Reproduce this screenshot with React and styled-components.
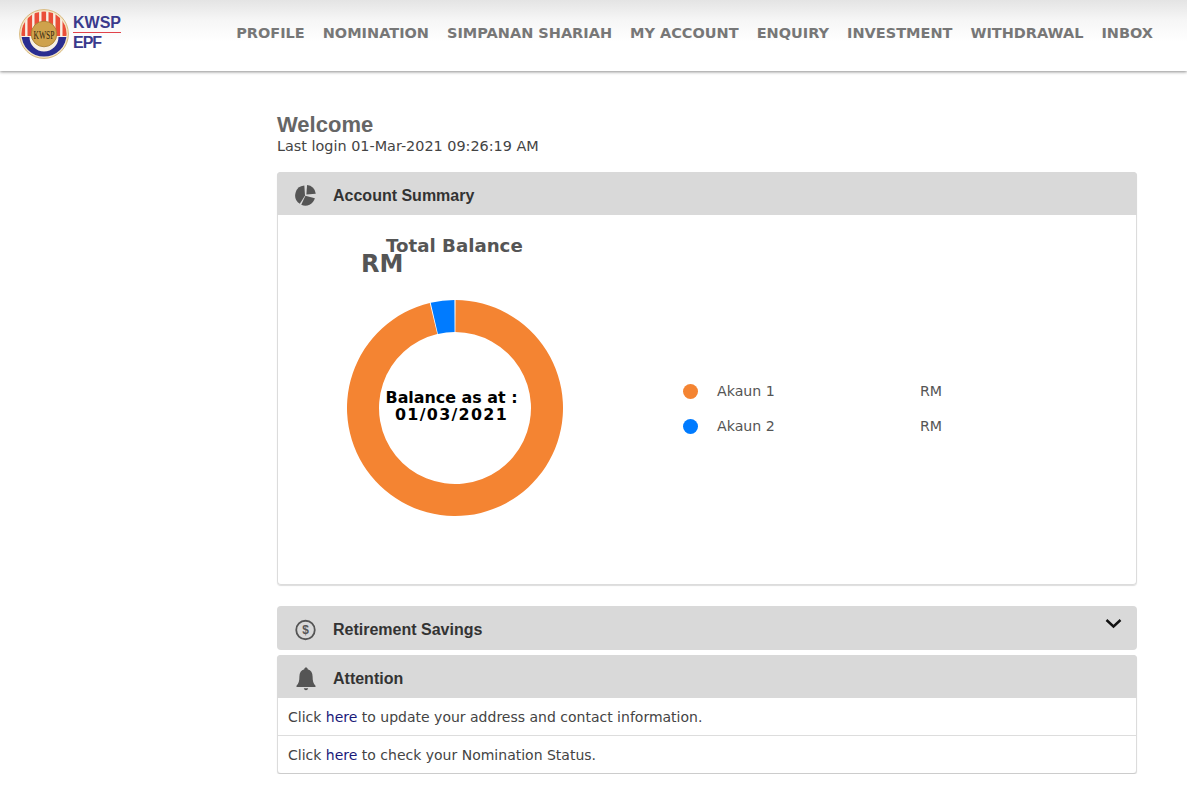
import React from 'react';
import styled, { createGlobalStyle } from 'styled-components';

const GlobalStyle = createGlobalStyle`
  html, body { margin: 0; padding: 0; background: #fff; }
  body { font-family: "DejaVu Sans", Verdana, sans-serif; color: #555; }
`;

const navItems = ['PROFILE', 'NOMINATION', 'SIMPANAN SHARIAH', 'MY ACCOUNT', 'ENQUIRY', 'INVESTMENT', 'WITHDRAWAL', 'INBOX'];

const Header = styled.header`
  height: 71px;
  box-sizing: border-box;
  display: flex;
  align-items: flex-start;
  justify-content: space-between;
  padding: 0 34px 0 19px;
  background: linear-gradient(#e4e4e4 0, #f6f6f6 20px, #fff 42px);
  box-shadow: 0 1px 3px rgba(0, 0, 0, 0.45);
`;

const Logo = styled.div`
  display: flex;
  align-items: center;
  gap: 4px;
  padding-top: 9px;
`;

const LogoText = styled.div`
  display: flex;
  flex-direction: column;
  font-family: "Liberation Sans", Arial, sans-serif;
  font-weight: 700;
  font-size: 16px;
  line-height: 18px;
  color: #3a3a8c;
  margin-top: -3px;
`;

const LogoTop = styled.span`
  border-bottom: 1px solid #e0424a;
  margin-bottom: 1px;
`;

const LogoBottom = styled.span`
  letter-spacing: -1px;
`;

const Nav = styled.nav`
  display: flex;
  gap: 18px;
  padding-top: 24px;
`;

const NavLink = styled.a`
  font-size: 14.5px;
  line-height: 18px;
  font-weight: 700;
  color: #777;
  white-space: nowrap;
`;

const Main = styled.main`
  width: 860px;
  margin: 0 0 0 277px;
  padding-top: 41px;
`;

const Title = styled.h1`
  margin: 0;
  font-family: "Liberation Sans", Arial, sans-serif;
  font-size: 22px;
  line-height: 26px;
  font-weight: 700;
  color: #666;
`;

const LastLogin = styled.div`
  font-size: 14.4px;
  line-height: 17px;
  color: #444;
`;

const Panel = styled.section`
  margin-top: ${(p) => p.$top || 5}px;
  border-radius: 4px;
  overflow: hidden;
  background: #fff;
  box-shadow: ${(p) => (p.$flat ? 'none' : '0 0 0 1px #dcdcdc inset, 0 1px 1px #ddd')};
`;

const PanelHead = styled.div`
  height: ${(p) => p.$h || 43}px;
  box-sizing: border-box;
  display: flex;
  align-items: center;
  padding: 4px 15px 0 18px;
  background: #d9d9d9;
`;

const IconSlot = styled.span`
  width: 21px;
  display: flex;
  justify-content: center;
  margin-right: 17px;
  color: #555;
`;

const PanelTitle = styled.span`
  flex: 1;
  font-family: "Liberation Sans", Arial, sans-serif;
  font-size: 16px;
  font-weight: 700;
  color: #333;
`;

const SummaryBody = styled.div`
  height: 370px;
  box-sizing: border-box;
  display: flex;
  flex-direction: column;
  padding: 20px 0 0 84px;
`;

const BalanceLabel = styled.div`
  margin-left: 25px;
  font-size: 18.2px;
  line-height: 21px;
  font-weight: 700;
  color: #555;
`;

const BalanceValue = styled.div`
  font-size: 24px;
  line-height: 22px;
  font-weight: 700;
  color: #555;
  margin-top: -3px;
`;

const ChartRow = styled.div`
  display: flex;
  align-items: center;
  margin-top: 25px;
  margin-left: -14px;
`;

const Donut = styled.div`
  position: relative;
  width: 216px;
  height: 216px;
  flex: none;
`;

const DonutText = styled.div`
  position: absolute;
  inset: 0 7px 5px 0;
  display: flex;
  flex-direction: column;
  align-items: center;
  justify-content: center;
  font-size: 15.9px;
  line-height: 17px;
  font-weight: 700;
  color: #000;
`;

const DonutDate = styled.span`
  letter-spacing: 1.3px;
`;

const Legend = styled.div`
  display: flex;
  flex-direction: column;
  gap: 17px;
  margin-left: 120px;
  margin-top: 1px;
`;

const LegendRow = styled.div`
  display: flex;
  align-items: center;
  font-size: 14.2px;
  line-height: 18px;
  color: #555;
`;

const Dot = styled.span`
  width: 15px;
  height: 15px;
  border-radius: 50%;
  background: ${(p) => p.$color};
  margin-right: 19px;
`;

const LegendName = styled.span`
  width: 203px;
`;

const NoticeRow = styled.div`
  height: 38px;
  display: flex;
  align-items: center;
  padding: 0 10px;
  font-size: 14px;
  color: #444;
  border-left: 1px solid #dcdcdc;
  border-right: 1px solid #dcdcdc;
  border-bottom: 1px solid ${(p) => (p.$last ? '#ccc' : '#ddd')};
  box-sizing: border-box;
  white-space: pre;
`;

const HereLink = styled.a`
  color: #1a1a7a;
`;

const polar = (deg, r, cx = 108, cy = 108) => {
  const a = ((deg - 90) * Math.PI) / 180;
  return [cx + r * Math.cos(a), cy + r * Math.sin(a)];
};

const wedge = (from, to) => {
  const [x1, y1] = polar(from, 108);
  const [x2, y2] = polar(to, 108);
  const [x3, y3] = polar(to, 76);
  const [x4, y4] = polar(from, 76);
  const large = to - from > 180 ? 1 : 0;
  return `M${x1} ${y1}A108 108 0 ${large} 1 ${x2} ${y2}L${x3} ${y3}A76 76 0 ${large} 0 ${x4} ${y4}Z`;
};

const slice = (from, to, r, cx, cy) => {
  const [x1, y1] = polar(from, r, cx, cy);
  const [x2, y2] = polar(to, r, cx, cy);
  return `M${cx} ${cy}L${x1} ${y1}A${r} ${r} 0 ${to - from > 180 ? 1 : 0} 1 ${x2} ${y2}Z`;
};

const KwspMark = () => (
  <svg width="50" height="50" viewBox="0 0 50 50">
    <defs>
      <clipPath id="mark-inner">
        <circle cx="25" cy="25" r="22.6" />
      </clipPath>
    </defs>
    <circle cx="25" cy="25" r="24.4" fill="#f4e6c6" stroke="#d8b87c" strokeWidth="1" />
    <g clipPath="url(#mark-inner)">
      <rect x="0" y="0" width="50" height="50" fill="#f8f0e4" />
      {[1.5, 8.5, 15.5, 22.5, 29.5, 36.5, 43.5].map((x) => (
        <rect key={x} x={x} y="0" width="4.6" height="27" fill="#ea4f38" />
      ))}
      <path d="M0 28h10.5a14.5 14.5 0 0 0 29 0H50v22H0z" fill="#2b2e90" />
    </g>
    <circle cx="25" cy="25" r="12.8" fill="#cfa24c" stroke="#a67c2e" strokeWidth="0.8" />
    <text transform="translate(25 29.5) scale(1 1.7)" textAnchor="middle" fontFamily="Liberation Serif, serif" fontSize="7.5" fill="#33260f">
      KWSP
    </text>
  </svg>
);

const PieIcon = () => (
  <svg width="21" height="21" viewBox="0 0 21 21">
    <path d={slice(4, 86, 9.4, 11.4, 9.4)} fill="#555" />
    <path d={slice(105, 205, 9.8, 10.4, 10.8)} fill="#555" />
    <path d={slice(212, 356, 9.8, 10, 10.4)} fill="#555" />
  </svg>
);

const DollarCircle = () => (
  <svg width="22" height="22" viewBox="0 0 22 22">
    <circle cx="11" cy="11" r="9.7" fill="none" stroke="#555" strokeWidth="1.9" />
    <text x="11" y="15.2" textAnchor="middle" fontFamily="Liberation Sans, sans-serif" fontWeight="700" fontSize="12.5" fill="#555">
      $
    </text>
  </svg>
);

const BellIcon = () => (
  <svg width="20" height="24" viewBox="0 0 20 24">
    <path d="M10 0.5c1 0 1.7.7 1.7 1.7C15 3 16.6 5.8 16.6 9.5c0 4.5.7 7.2 2.9 9.3v1.2H.5v-1.2c2.2-2.1 2.9-4.8 2.9-9.3 0-3.7 1.6-6.5 4.9-7.3 0-1 .7-1.7 1.7-1.7z" fill="#555" />
    <path d="M7.8 21.2h4.4c-.3 1.2-1.1 2-2.2 2s-1.9-.8-2.2-2z" fill="#555" />
  </svg>
);

const Chevron = () => (
  <svg width="17" height="11" viewBox="0 0 17 11" style={{ marginTop: -13 }}>
    <path d="M1.5 2l7 6.5 7-6.5" fill="none" stroke="#111" strokeWidth="2.4" />
  </svg>
);

const App = () => {
  return (
    <>
      <GlobalStyle />
      <Header>
        <Logo>
          <KwspMark />
          <LogoText>
            <LogoTop>KWSP</LogoTop>
            <LogoBottom>EPF</LogoBottom>
          </LogoText>
        </Logo>
        <Nav>
          {navItems.map((item) => (
            <NavLink key={item}>{item}</NavLink>
          ))}
        </Nav>
      </Header>
      <Main>
        <Title>Welcome</Title>
        <LastLogin>Last login 01-Mar-2021 09:26:19 AM</LastLogin>
        <Panel $top={17}>
          <PanelHead>
            <IconSlot>
              <PieIcon />
            </IconSlot>
            <PanelTitle>Account Summary</PanelTitle>
          </PanelHead>
          <SummaryBody>
            <BalanceLabel>Total Balance</BalanceLabel>
            <BalanceValue>RM</BalanceValue>
            <ChartRow>
              <Donut>
                <svg width="216" height="216" viewBox="0 0 216 216">
                  <path d={wedge(0.3, 346.5)} fill="#f48432" />
                  <path d={wedge(347, 359.7)} fill="#007bff" />
                </svg>
                <DonutText>
                  <span>Balance as at :</span>
                  <DonutDate>01/03/2021</DonutDate>
                </DonutText>
              </Donut>
              <Legend>
                <LegendRow>
                  <Dot $color="#f48432" />
                  <LegendName>Akaun 1</LegendName>
                  <span>RM</span>
                </LegendRow>
                <LegendRow>
                  <Dot $color="#007bff" />
                  <LegendName>Akaun 2</LegendName>
                  <span>RM</span>
                </LegendRow>
              </Legend>
            </ChartRow>
          </SummaryBody>
        </Panel>
        <Panel $top={21} $flat>
          <PanelHead $h={44}>
            <IconSlot>
              <DollarCircle />
            </IconSlot>
            <PanelTitle>Retirement Savings</PanelTitle>
            <Chevron />
          </PanelHead>
        </Panel>
        <Panel $top={5}>
          <PanelHead>
            <IconSlot>
              <BellIcon />
            </IconSlot>
            <PanelTitle>Attention</PanelTitle>
          </PanelHead>
          <NoticeRow>
            Click <HereLink>here</HereLink> to update your address and contact information.
          </NoticeRow>
          <NoticeRow $last>
            Click <HereLink>here</HereLink> to check your Nomination Status.
          </NoticeRow>
        </Panel>
      </Main>
    </>
  );
};

export default App;
